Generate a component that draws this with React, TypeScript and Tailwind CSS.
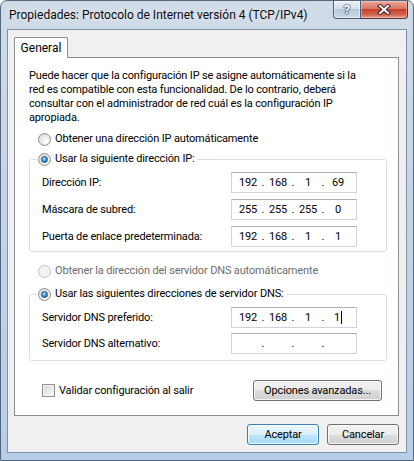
import { Fragment } from "react";

function Radio({ checked, disabled }: { checked?: boolean; disabled?: boolean }) {
  return (
    <span
      className={
        "w-[13px] h-[13px] shrink-0 rounded-full border flex items-center justify-center " +
        (disabled
          ? "border-[#c4c4c4] bg-[#f3f3f3]"
          : "border-[#8e8f8f] bg-[radial-gradient(circle_at_65%_65%,#ffffff,#d2d2d2)]")
      }
    >
      {checked && (
        <span className="w-[7px] h-[7px] rounded-full border border-[#1d4f7d] bg-[radial-gradient(circle_at_40%_35%,#a8e0ff,#3d8fd0_55%,#174a7c)]" />
      )}
    </span>
  );
}

function IpField({ parts, cursor }: { parts: string[]; cursor?: boolean }) {
  return (
    <div className="w-[126px] h-[21px] border border-[#d0d4da] border-t-[#abadb3] bg-white flex items-center pl-[3px] leading-[16px]">
      {parts.map((p, i) => (
        <Fragment key={i}>
          <span className="w-[26px] flex justify-center items-center">
            {p}
            {cursor && i === 3 && <span className="w-[1px] h-[13px] bg-black ml-[1px]" />}
          </span>
          {i < 3 && <span className="w-[4px] flex justify-center">.</span>}
        </Fragment>
      ))}
    </div>
  );
}

function Row({ label, children }: { label: string; children: React.ReactNode }) {
  return (
    <div className="flex items-center justify-between pl-[12px] pr-[29px]">
      <span className="leading-[16px] whitespace-nowrap">{label}</span>
      {children}
    </div>
  );
}

function Btn({ children, def, className }: { children: React.ReactNode; def?: boolean; className?: string }) {
  return (
    <div
      className={
        "h-[21px] rounded-[3px] border flex items-center justify-center leading-[16px] whitespace-nowrap shadow-[inset_0_0_0_1px_rgba(255,255,255,0.75)] " +
        (def
          ? "border-[#3c7fb1] bg-[linear-gradient(#eaf6fd_0%,#d9f0fc_50%,#bee6fd_50%,#a7d9f5_100%)] "
          : "border-[#707070] bg-[linear-gradient(#f2f2f2_0%,#ebebeb_50%,#dddddd_50%,#cfcfcf_100%)] ") +
        (className ?? "")
      }
    >
      {children}
    </div>
  );
}

export default function App() {
  return (
    <div className="w-[414px] h-[461px] bg-white font-['Roboto',sans-serif] text-[11px] tracking-[-0.15px] text-black">
      <div className="w-full h-full flex flex-col rounded-t-[7px] border border-[#53687f] bg-[linear-gradient(180deg,#d0dbe7_0%,#c6d5e6_40%,#b7cee8_100%)] overflow-hidden">
        {/* Title bar */}
        <div className="h-[28px] shrink-0 flex items-start justify-between">
          <div className="pl-[8px] pt-[6px] text-[12px] tracking-normal leading-[16px] text-[#0b0b0b] whitespace-nowrap [text-shadow:0_0_6px_rgba(255,255,255,0.9)]">
            Propiedades: Protocolo de Internet versión 4 (TCP/IPv4)
          </div>
          <div className="flex mr-[5px]">
            <div className="w-[28px] h-[18px] border border-t-0 border-[#4b5d74] rounded-bl-[4px] bg-[linear-gradient(#e8eef5_0%,#d5e0ec_45%,#b8c9dc_50%,#c9d8e8_100%)] flex items-center justify-center shadow-[inset_0_0_0_1px_rgba(255,255,255,0.5)]">
              <span className="font-bold text-[13px] leading-[14px] text-white [text-shadow:0_0_1px_#2b3a4e,0_0_1px_#2b3a4e,0_0_2px_#2b3a4e]">?</span>
            </div>
            <div className="w-[47px] h-[18px] border border-t-0 border-l-0 border-[#4b3434] rounded-br-[4px] bg-[linear-gradient(#e9a797_0%,#db7966_45%,#c6402b_50%,#d2634d_80%,#e69e88_100%)] flex items-center justify-center shadow-[inset_0_0_0_1px_rgba(255,255,255,0.35)]">
              <svg width="14" height="11" viewBox="0 0 14 11">
                <path d="M3 2 L11 9 M11 2 L3 9" stroke="#3b2323" strokeWidth="4" strokeLinecap="square" />
                <path d="M3 2 L11 9 M11 2 L3 9" stroke="#ffffff" strokeWidth="2" strokeLinecap="square" />
              </svg>
            </div>
          </div>
        </div>

        {/* Client area */}
        <div className="flex-1 mx-[6px] mb-[7px] border border-[#7d90a7] bg-[#f0f0f0] flex flex-col pl-[6px] pr-[7px] pt-[7px]">
          {/* Tab */}
          <div className="flex">
            <div className="relative z-10 -mb-[1px] w-[54px] h-[21px] border border-b-0 border-[#898c95] rounded-t-[2px] bg-white flex items-center justify-center leading-[16px] text-[12px] tracking-normal">
              General
            </div>
          </div>
          {/* Panel */}
          <div className="h-[359px] border border-[#898c95] bg-white flex flex-col">
            <p className="pl-[14px] pt-[11px] leading-[14px] whitespace-nowrap">
              Puede hacer que la configuración IP se asigne automáticamente si la
              <br />
              red es compatible con esta funcionalidad. De lo contrario, deberá
              <br />
              consultar con el administrador de red cuál es la configuración IP
              <br />
              apropiada.
            </p>
            <div className="mt-[7px] pl-[23px] flex items-center gap-[4px] h-[14px]">
              <Radio />
              <span className="leading-[16px]">Obtener una dirección IP automáticamente</span>
            </div>
            <fieldset className="mt-[5px] ml-[14px] mr-[11px] border border-[#d5dfe5] rounded-[3px] p-0">
              <legend className="ml-[7px] px-[1px] flex items-center gap-[4px] h-[16px]">
                <Radio checked />
                <span className="leading-[16px] pr-[1px]">Usar la siguiente dirección IP:</span>
              </legend>
              <div className="pt-[5px] pb-[4px] flex flex-col gap-[6px]">
                <Row label="Dirección IP:">
                  <IpField parts={["192", "168", "1", "69"]} />
                </Row>
                <Row label="Máscara de subred:">
                  <IpField parts={["255", "255", "255", "0"]} />
                </Row>
                <Row label="Puerta de enlace predeterminada:">
                  <IpField parts={["192", "168", "1", "1"]} />
                </Row>
              </div>
            </fieldset>
            <div className="mt-[12px] pl-[23px] flex items-center gap-[4px] h-[14px]">
              <Radio disabled />
              <span className="leading-[16px] text-[#6d6d6d]">Obtener la dirección del servidor DNS automáticamente</span>
            </div>
            <fieldset className="mt-[8px] ml-[14px] mr-[11px] border border-[#d5dfe5] rounded-[3px] p-0">
              <legend className="ml-[7px] px-[1px] flex items-center gap-[4px] h-[16px]">
                <Radio checked />
                <span className="leading-[16px] pr-[1px]">Usar las siguientes direcciones de servidor DNS:</span>
              </legend>
              <div className="pt-[5px] pb-[6px] flex flex-col gap-[5px]">
                <Row label="Servidor DNS preferido:">
                  <IpField parts={["192", "168", "1", "1"]} cursor />
                </Row>
                <Row label="Servidor DNS alternativo:">
                  <IpField parts={["", "", "", ""]} />
                </Row>
              </div>
            </fieldset>
            <div className="mt-[19px] pl-[27px] pr-[16px] flex items-center justify-between">
              <div className="flex items-center gap-[4px]">
                <span className="w-[13px] h-[13px] border border-[#8e8f8f] bg-[linear-gradient(135deg,#d6d6d6,#fafafa)] shadow-[inset_0_0_0_1px_#f4f4f4]" />
                <span className="leading-[16px]">Validar configuración al salir</span>
              </div>
              <Btn className="w-[129px]">Opciones avanzadas...</Btn>
            </div>
          </div>
          {/* Bottom buttons */}
          <div className="mt-[8px] flex justify-end gap-[8px]">
            <Btn def className="w-[72px]">Aceptar</Btn>
            <Btn className="w-[72px]">Cancelar</Btn>
          </div>
        </div>
      </div>
    </div>
  );
}
